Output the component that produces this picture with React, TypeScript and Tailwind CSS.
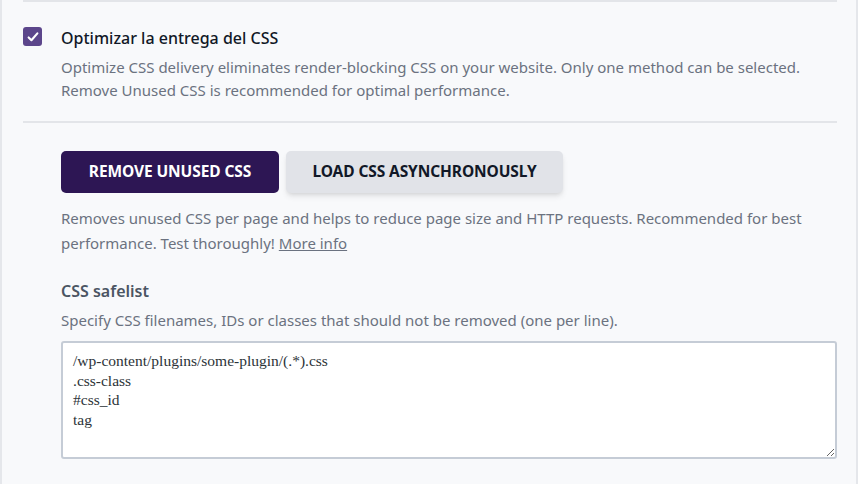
import { useState } from "react";

const font = { fontFamily: '"Noto Sans", "Open Sans", sans-serif' };

export default function App() {
  const [method, setMethod] = useState<"unused" | "async">("unused");
  const [checked, setChecked] = useState(true);

  return (
    <div className="h-[484px] w-[858px] overflow-hidden bg-white" style={font}>
      <div className="h-full border-x-2 border-[#e5e7eb] bg-[#f8f9fb] pl-[21px] pr-[19px]">
        <div className="border-t-2 border-[#e3e5e9] pt-[24px] pb-[19px]">
          <div className="flex items-start gap-[19px]">
            <button
              onClick={() => setChecked(!checked)}
              className="mt-[1px] flex h-[19px] w-[19px] shrink-0 items-center justify-center rounded-[3px] bg-[#5c468b]"
            >
              {checked && (
                <svg width="14" height="14" viewBox="0 0 16 16" fill="none">
                  <path d="M3 8.5l3.2 3.2L13 3.8" stroke="white" strokeWidth="2.4" strokeLinecap="round" strokeLinejoin="round" />
                </svg>
              )}
            </button>
            <div>
              <p className="text-[16px] leading-[24px] font-medium text-[#111827]">Optimizar la entrega del CSS</p>
              <p className="mt-[6px] text-[15px] leading-[23px] text-[#6b7280]">
                Optimize CSS delivery eliminates render-blocking CSS on your website. Only one method can be selected.
                <br />
                Remove Unused CSS is recommended for optimal performance.
              </p>
            </div>
          </div>
        </div>

        <div className="border-t-2 border-[#e3e5e9] pl-[38px] pt-[28px]">
          <div className="flex gap-[7px]">
            <button
              onClick={() => setMethod("unused")}
              className={`h-[42px] w-[218px] rounded-[5px] text-[15.5px] font-bold uppercase tracking-[-0.1px] ${
                method === "unused" ? "bg-[#2d1654] text-white" : "bg-[#e1e3e8] text-[#111827] shadow-md"
              }`}
            >
              Remove Unused CSS
            </button>
            <button
              onClick={() => setMethod("async")}
              className={`h-[42px] w-[277px] rounded-[5px] text-[15.5px] font-bold uppercase tracking-[-0.1px] ${
                method === "async" ? "bg-[#2d1654] text-white" : "bg-[#e1e3e8] text-[#111827] shadow-md"
              }`}
            >
              Load CSS Asynchronously
            </button>
          </div>

          <p className="mt-[13px] text-[15px] leading-[25px] text-[#6b7280]">
            Removes unused CSS per page and helps to reduce page size and HTTP requests. Recommended for best
            <br />
            performance. Test thoroughly!{" "}
            <a href="#" className="text-[#6b7280] underline">
              More info
            </a>
          </p>

          <p className="mt-[23px] text-[16px] leading-[24px] font-semibold text-[#4b5563]">CSS safelist</p>
          <p className="mt-[6px] text-[15px] leading-[23px] text-[#6b7280]">
            Specify CSS filenames, IDs or classes that should not be removed (one per line).
          </p>
          <textarea
            className="mt-[9px] block h-[118px] w-full rounded-[3px] border-2 border-[#c5ccd6] bg-white px-[10px] pt-[8px] text-[15.5px] leading-[19.5px] text-[#2c3338] outline-none"
            style={{ fontFamily: '"Liberation Serif", serif' }}
            defaultValue={"/wp-content/plugins/some-plugin/(.*).css\n.css-class\n#css_id\ntag"}
          />
        </div>
      </div>
    </div>
  );
}
